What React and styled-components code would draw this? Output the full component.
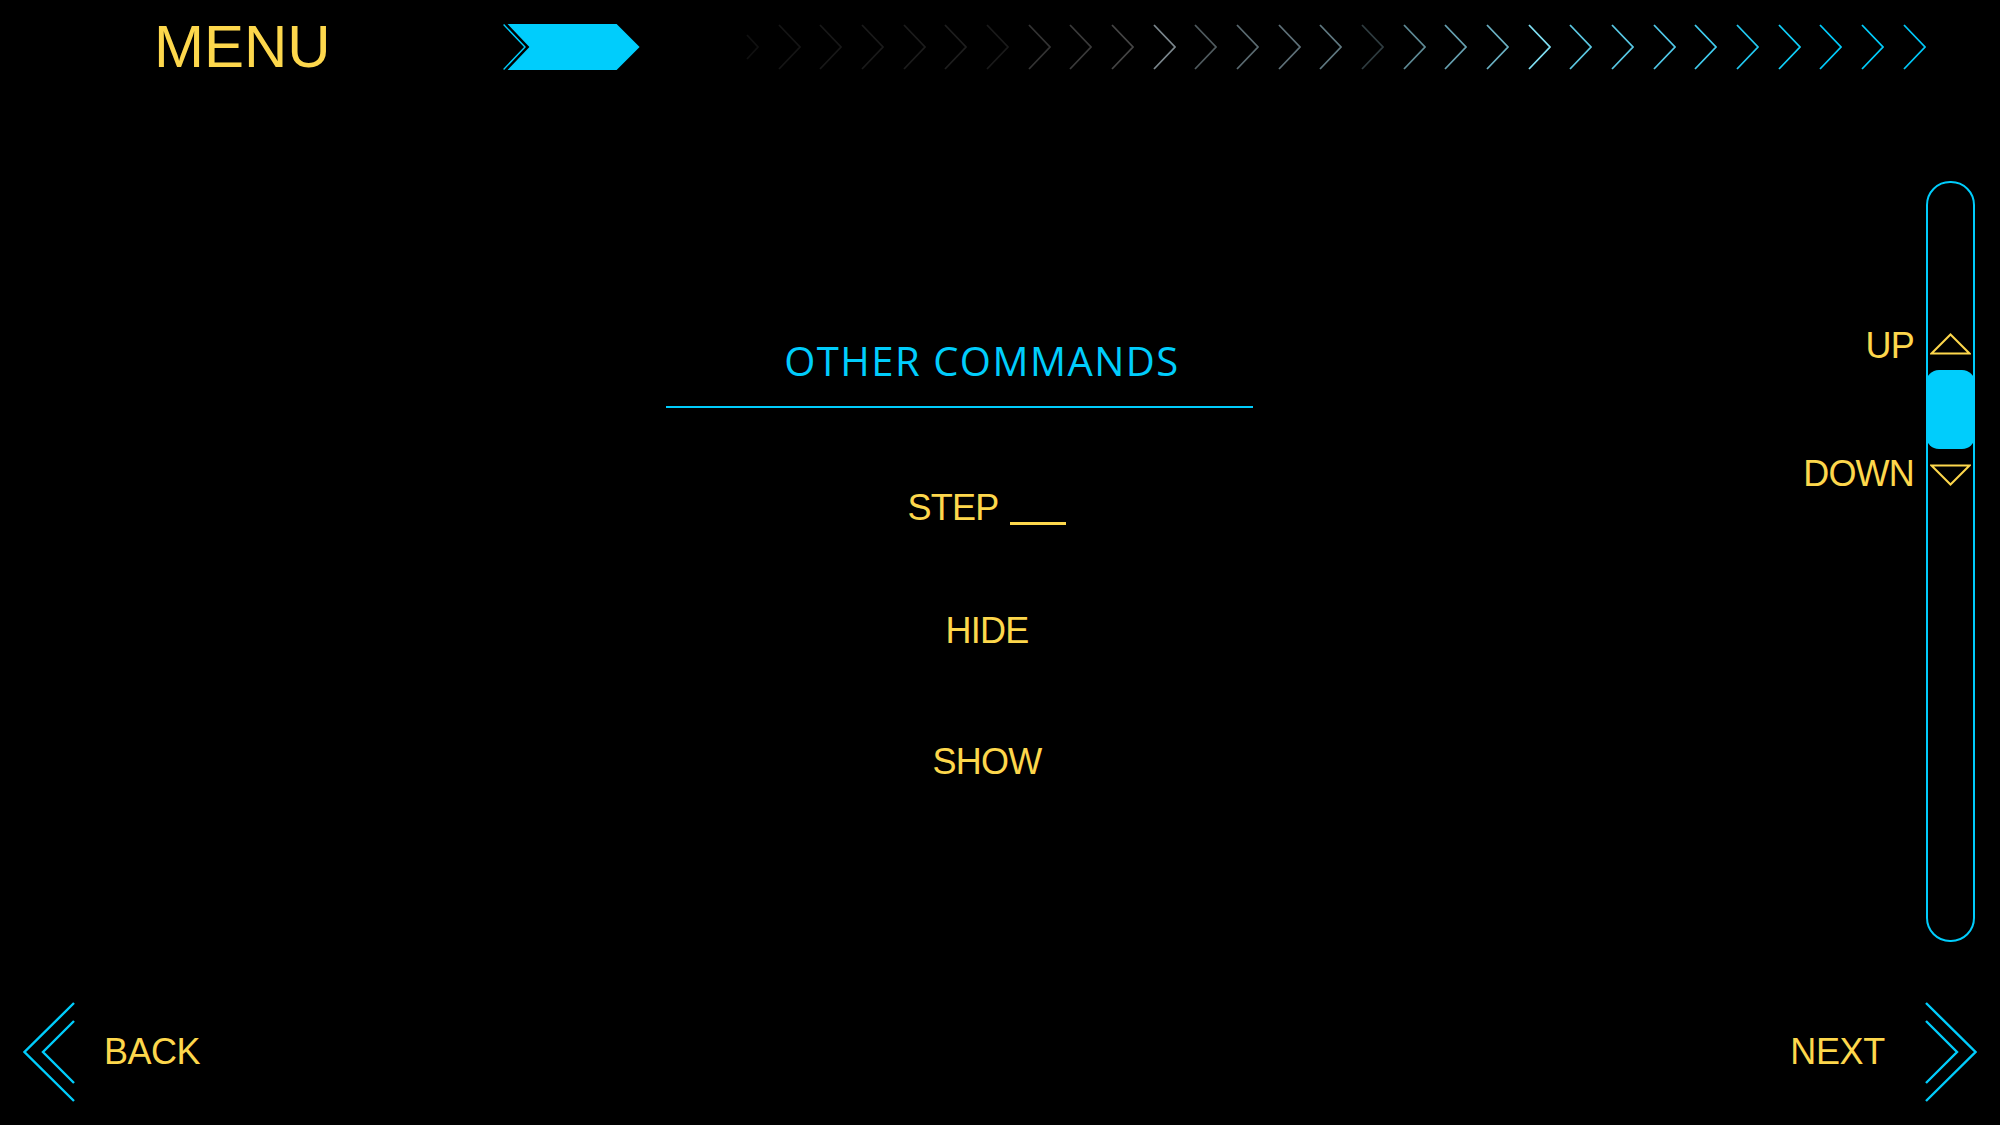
import React from 'react'
import styled, { createGlobalStyle } from 'styled-components'

const GlobalStyle = createGlobalStyle`
    html, body {
        margin: 0;
        padding: 0;
        background: #000;
    }
`;

const CYAN = '#00cdfc';
const YELLOW = '#fdd74c';

// fade of the chevron strip, dark on the left, bright cyan on the right
const stripColors = [
    '#101010', '#151515', '#181818', '#1a1a1a', '#1c1c1c', '#1e1e1e', '#1a1a1a',
    '#333333', '#3a3a3a', '#454545', '#7a868c', '#4f5a5e', '#5a6a70', '#5e7078',
    '#5f7880', '#2f3c40', '#5e8a95', '#66a0b0', '#6ab0c2', '#80e0f4', '#5cc8e2',
    '#58c8e4', '#50c8e8', '#40ccee', '#22c8f0', '#10d0fa', '#00ccfc', '#00cdfc', '#00c8f8'
];

const Screen = styled.div`
    width: 2000px;
    height: 1125px;
    overflow: hidden;
    background: #000;
    display: grid;
    grid-template-rows: 93px 887px 145px;
    font-family: "Liberation Sans", Arial, sans-serif;
`;

const Header = styled.header`
    display: flex;
    align-items: center;
`;

const MenuTitle = styled.h1`
    width: 503px;
    box-sizing: border-box;
    margin: 0;
    padding-left: 154px;
    font-size: 60px;
    font-weight: normal;
    line-height: 1;
    color: ${YELLOW};
`;

const Strip = styled.div`
    display: flex;
    gap: 18.68px;
    margin-left: 96px;
`;

const Main = styled.main`
    display: grid;
    grid-template-columns: 1fr auto;
    min-height: 0;
`;

const Content = styled.section`
    display: flex;
    flex-direction: column;
    align-items: flex-start;
    padding-top: 248px;
`;

const SectionTitle = styled.h2`
    width: 587px;
    box-sizing: border-box;
    margin: 0 0 0 666px;
    padding: 0 0 25px 45px;
    border-bottom: 2px solid ${CYAN};
    text-align: center;
    font-family: "Open Sans", "Noto Sans", sans-serif;
    font-size: 40px;
    font-weight: normal;
    letter-spacing: 1.5px;
    line-height: 1;
    color: ${CYAN};
`;

const Commands = styled.ul`
    list-style: none;
    margin: 82px 0 0 837px;
    padding: 0;
    width: 300px;
    display: flex;
    flex-direction: column;
    gap: 87px;
`;

const Command = styled.li`
    text-align: center;
    font-size: 36px;
    line-height: 1;
    letter-spacing: -0.8px;
    color: ${YELLOW};

    &:last-child {
        margin-top: 8px;
    }
`;

const Blank = styled.span`
    display: inline-block;
    width: 56px;
    height: 0;
    margin-left: 12px;
    border-bottom: 3px solid ${YELLOW};
    vertical-align: -5px;
`;

const ScrollArea = styled.aside`
    display: flex;
    align-items: flex-start;
    gap: 12px;
    padding: 88px 25px 0 0;
`;

const ScrollLabels = styled.div`
    display: flex;
    flex-direction: column;
    align-items: flex-end;
    gap: 88px;
    padding-top: 145px;
`;

const ScrollLabel = styled.span`
    font-size: 36px;
    line-height: 40px;
    letter-spacing: -0.8px;
    color: ${YELLOW};
`;

const Track = styled.div`
    box-sizing: border-box;
    width: 49px;
    height: 761px;
    border: 2px solid ${CYAN};
    border-radius: 24px;
    display: flex;
    flex-direction: column;
    align-items: center;
    padding-top: 150px;
`;

const Thumb = styled.div`
    align-self: stretch;
    margin: 15px -2px;
    height: 79px;
    border-radius: 13px;
    background: ${CYAN};
`;

const Footer = styled.footer`
    display: flex;
    align-items: center;
    justify-content: space-between;
    padding: 0 23px;
    margin-top: -2px;
`;

const NavButton = styled.div`
    display: flex;
    align-items: center;
    gap: ${({ $gap }) => $gap}px;
    font-size: 36px;
    line-height: 1;
    letter-spacing: ${({ $tight }) => ($tight ? '-0.5px' : '-0.3px')};
    color: ${YELLOW};
`;

const Banner = () => (
    <svg width="137" height="46" viewBox="0 0 137 46">
        <polygon points="4.6,0 113.6,0 136.6,23 113.6,46 4.6,46 26.4,23" fill={CYAN} />
        <polyline points="0.6,0.5 22,23 0.6,45.5" fill="none" stroke={CYAN} strokeWidth="1.4" />
    </svg>
);

// the first chevron of the strip is faded down to a short stub
const StripChevron = ({ color, stub }) => (
    <svg width="23" height="46" viewBox="0 0 23 46">
        <polyline
            points={stub ? '11,11 22,23 11,35' : '1,1 22,23 1,45'}
            fill="none"
            stroke={color}
            strokeWidth="1.8"
        />
    </svg>
);

const Triangle = ({ down }) => (
    <svg width="41" height="22" viewBox="0 0 41 22">
        <polygon
            points={down ? '1.5,1.5 39.5,1.5 20.5,20.5' : '1.5,20.5 39.5,20.5 20.5,1.5'}
            fill="none"
            stroke={YELLOW}
            strokeWidth="2"
        />
    </svg>
);

const DoubleChevron = ({ right }) => (
    <svg width="52" height="100" viewBox="0 0 52 100" style={right ? { transform: 'scaleX(-1)' } : undefined}>
        <polyline points="51,1 1.5,50 51,99" fill="none" stroke={CYAN} strokeWidth="2.4" />
        <polyline points="51,19 20,50 51,81" fill="none" stroke={CYAN} strokeWidth="2.4" />
    </svg>
);

const App = () => {
    const commands = ['STEP', 'HIDE', 'SHOW'];

    return (
        <>
            <GlobalStyle />
            <Screen>
                <Header>
                    <MenuTitle>MENU</MenuTitle>
                    <Banner />
                    <Strip>
                        {stripColors.map((c, i) => (
                            <StripChevron key={i} color={c} stub={i === 0} />
                        ))}
                    </Strip>
                </Header>

                <Main>
                    <Content>
                        <SectionTitle>OTHER COMMANDS</SectionTitle>
                        <Commands>
                            {commands.map((name) => (
                                <Command key={name}>
                                    {name}
                                    {name === 'STEP' && <Blank />}
                                </Command>
                            ))}
                        </Commands>
                    </Content>

                    <ScrollArea>
                        <ScrollLabels>
                            <ScrollLabel>UP</ScrollLabel>
                            <ScrollLabel>DOWN</ScrollLabel>
                        </ScrollLabels>
                        <Track>
                            <Triangle />
                            <Thumb />
                            <Triangle down />
                        </Track>
                    </ScrollArea>
                </Main>

                <Footer>
                    <NavButton $gap={29} $tight>
                        <DoubleChevron />
                        BACK
                    </NavButton>
                    <NavButton $gap={40}>
                        NEXT
                        <DoubleChevron right />
                    </NavButton>
                </Footer>
            </Screen>
        </>
    )
}

export default App
